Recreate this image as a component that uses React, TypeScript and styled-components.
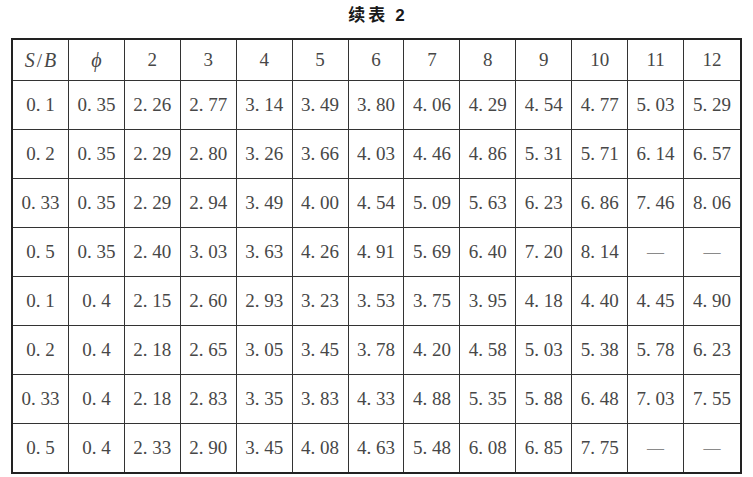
import React from 'react';
import styled, {createGlobalStyle} from "styled-components";

const HEAD = ['2', '3', '4', '5', '6', '7', '8', '9', '10', '11', '12'];

const ROWS: string[][] = [
    ['0. 1', '0. 35', '2. 26', '2. 77', '3. 14', '3. 49', '3. 80', '4. 06', '4. 29', '4. 54', '4. 77', '5. 03', '5. 29'],
    ['0. 2', '0. 35', '2. 29', '2. 80', '3. 26', '3. 66', '4. 03', '4. 46', '4. 86', '5. 31', '5. 71', '6. 14', '6. 57'],
    ['0. 33', '0. 35', '2. 29', '2. 94', '3. 49', '4. 00', '4. 54', '5. 09', '5. 63', '6. 23', '6. 86', '7. 46', '8. 06'],
    ['0. 5', '0. 35', '2. 40', '3. 03', '3. 63', '4. 26', '4. 91', '5. 69', '6. 40', '7. 20', '8. 14', '—', '—'],
    ['0. 1', '0. 4', '2. 15', '2. 60', '2. 93', '3. 23', '3. 53', '3. 75', '3. 95', '4. 18', '4. 40', '4. 45', '4. 90'],
    ['0. 2', '0. 4', '2. 18', '2. 65', '3. 05', '3. 45', '3. 78', '4. 20', '4. 58', '5. 03', '5. 38', '5. 78', '6. 23'],
    ['0. 33', '0. 4', '2. 18', '2. 83', '3. 35', '3. 83', '4. 33', '4. 88', '5. 35', '5. 88', '6. 48', '7. 03', '7. 55'],
    ['0. 5', '0. 4', '2. 33', '2. 90', '3. 45', '4. 08', '4. 63', '5. 48', '6. 08', '6. 85', '7. 75', '—', '—'],
];

const App = () => {
    return (
        <>
            <GlobalStyle/>
            <Page>
                <Title>续表 <TitleNum>2</TitleNum></Title>
                <Table>
                    <thead>
                    <tr>
                        <HeadCell><Italic>S</Italic><Slash>/</Slash><Italic>B</Italic></HeadCell>
                        <HeadCell><Italic>ϕ</Italic></HeadCell>
                        {HEAD.map(h => <HeadCell key={h}>{h}</HeadCell>)}
                    </tr>
                    </thead>
                    <tbody>
                    {ROWS.map((row, i) => (
                        <tr key={i}>
                            {row.map((v, j) => (
                                <Cell key={j} dash={v === '—'}>{v}</Cell>
                            ))}
                        </tr>
                    ))}
                    </tbody>
                </Table>
            </Page>
        </>
    );
};

export default App;

// ---------------------------
const GlobalStyle = createGlobalStyle`
  html, body {
    margin: 0;
    padding: 0;
    background: #fff;
  }
`

const Page = styled.div`
  width: 753px;
  height: 477px;
  padding-left: 11px;
  box-sizing: border-box;
  overflow: hidden;
`

const Title = styled.div`
  height: 38px;
  padding: 4px 0 0;
  box-sizing: border-box;
  width: 731px;
  text-align: center;
  font-family: "Noto Sans CJK SC", sans-serif;
  font-weight: 700;
  font-size: 17px;
  line-height: 20px;
  letter-spacing: 3px;
  color: #1a1a1a;
`

const TitleNum = styled.span`
  font-family: "Liberation Sans", sans-serif;
  letter-spacing: 0;
`

const Table = styled.table`
  width: 731px;
  table-layout: fixed;
  border-collapse: separate;
  border-spacing: 0;
  border: 2px solid #222;
  font-family: "Liberation Serif", serif;
  font-size: 19px;
  color: #474747;

  tr > *:last-child {
    border-right: none;
  }

  tbody tr:last-child > td {
    border-bottom: none;
  }
`

const HeadCell = styled.th`
  height: 40px;
  padding: 0;
  font-weight: normal;
  text-align: center;
  border-right: 1px solid #333;
  border-bottom: 1px solid #333;
`

const Cell = styled.td<{ dash?: boolean }>`
  height: 48px;
  padding: 0;
  text-align: center;
  white-space: nowrap;
  border-right: 1px solid #333;
  border-bottom: 1px solid #333;
  color: ${props => props.dash ? '#8a8a8a' : 'inherit'};
  font-size: ${props => props.dash ? '17px' : '19px'};
`

const Italic = styled.i`
  font-style: italic;
  font-size: 20px;
`

const Slash = styled.span`
  padding: 0 2px;
`
